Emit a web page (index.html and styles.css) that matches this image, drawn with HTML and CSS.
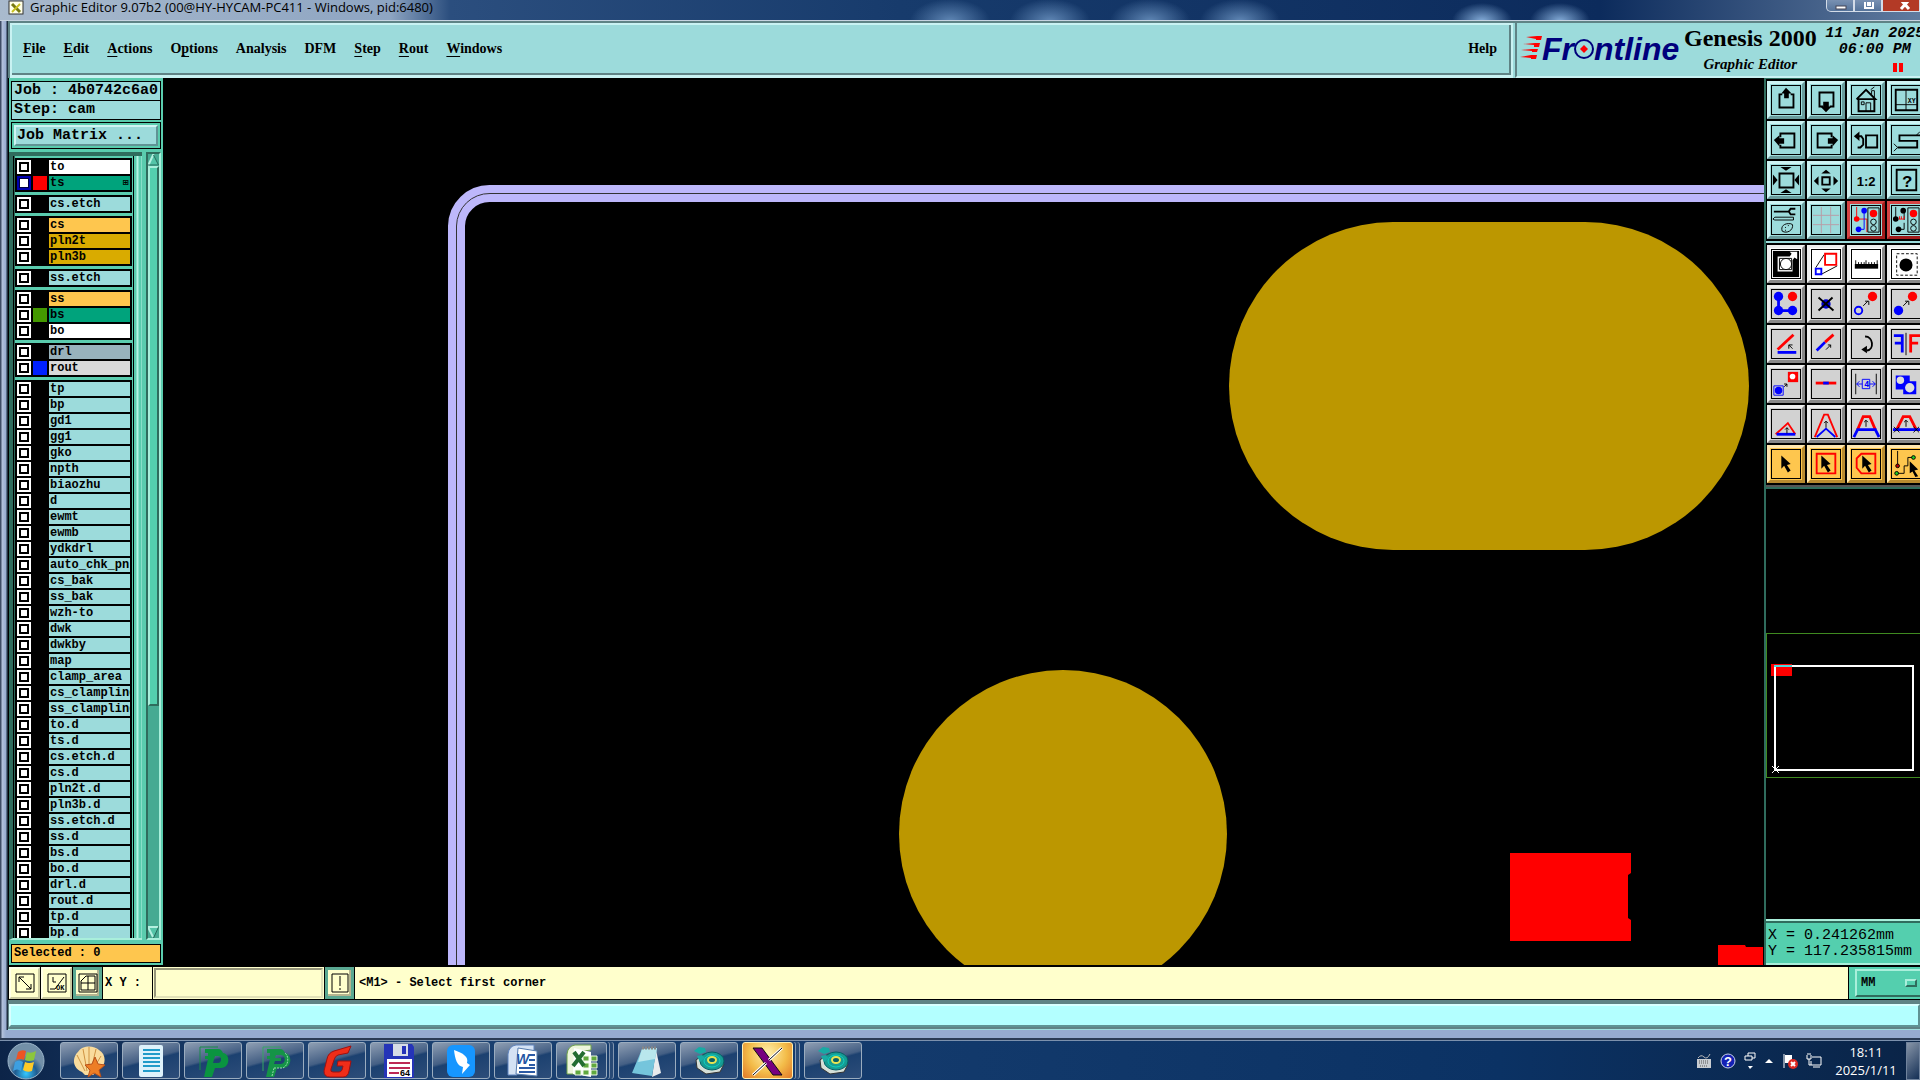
FILE: index.html
```
<!DOCTYPE html>
<html lang="en">

<head>
    <meta charset="UTF-8">
    <meta name="viewport" content="width=device-width, initial-scale=1.0">
    <title>Graphic Editor</title>
    <link rel="stylesheet" href="styles.css">
</head>

<body>

    <!-- Window title -->
    <div class="titlebar">
        <svg class="title-icon" width="16" height="16" viewBox="0 0 16 16"><rect x="1" y="1" width="14" height="13" fill="#ffffe8" stroke="#333"/><path d="M4 4l8 8" stroke="#777a10" stroke-width="3"/><path d="M12 4l-8 8" stroke="#c8c020" stroke-width="2"/></svg>
        <span class="title-text">Graphic Editor 9.07b2 (00@HY-HYCAM-PC411 - Windows, pid:6480)</span>
        <div class="window-buttons">
            <button class="win-btn" aria-label="Minimize"><svg width="12" height="8" viewBox="0 0 12 8"><rect x="1" y="4" width="10" height="3" fill="#fff" stroke="#445"/></svg></button>
            <button class="win-btn" aria-label="Maximize"><svg width="12" height="8" viewBox="0 0 12 8"><path d="M2 0v6h8V0M5 0v3h2V0" fill="none" stroke="#fff" stroke-width="2"/></svg></button>
            <button class="win-btn close" aria-label="Close"><svg width="12" height="8" viewBox="0 0 12 8"><path d="M2-2l8 9M10-2l-8 9" stroke="#fff" stroke-width="3"/></svg></button>
        </div>
    </div>

    <div class="frame">

        <header class="top">
            <nav class="menu">
                <a href="#"><u>F</u>ile</a>
                <a href="#"><u>E</u>dit</a>
                <a href="#"><u>A</u>ctions</a>
                <a href="#">O<u>p</u>tions</a>
                <a href="#">Analysis</a>
                <a href="#">DFM</a>
                <a href="#"><u>S</u>tep</a>
                <a href="#"><u>R</u>out</a>
                <a href="#"><u>W</u>indows</a>
                <a href="#" class="help">Help</a>
            </nav>
            <div class="brand">
                <div class="logo">
                    <svg width="22" height="24" viewBox="0 0 22 24" fill="#f00"><path d="M6 2l11-1h5l-1 4h-5v-1zM3 9l12-1h5l-1 4h-5v-2zM1 15l11-1h6l-1 3h-5v-1zM0 22l11-2h6l-1 4h-5v-1z"/></svg>
                    <span>Fr</span>
                    <svg width="20" height="24" viewBox="0 0 20 24"><circle cx="10" cy="14" r="9" fill="none" stroke="#00007c" stroke-width="2"/><path d="M10 10l4 4-4 4-4-4z" fill="#f00"/></svg>
                    <span>ntline</span>
                </div>
                <div class="product">
                    <div class="product-name">Genesis 2000</div>
                    <div class="product-sub">Graphic Editor</div>
                </div>
                <div class="clock">
                    <div>11 Jan 2025</div>
                    <div>06:00 PM</div>
                    <div class="pause"><i></i><i></i></div>
                </div>
            </div>
        </header>

        <div class="work">

            <!-- Layer list -->
            <aside class="sidebar">
                <div class="info">Job : 4b0742c6a0</div>
                <div class="info">Step: cam</div>
                <div class="matrix"><button class="matrix-btn">Job Matrix ...</button></div>
                <div class="layers">
                    <div class="layer-list">
                        <div class="group">
                            <label class="row"><input type="checkbox"><i></i><span class="white">to</span></label>
                            <label class="row"><input type="checkbox" checked><i class="red"></i><span class="green">ts<b>⊞</b></span></label>
                        </div>
                        <div class="group">
                            <label class="row"><input type="checkbox"><i></i><span>cs.etch</span></label>
                        </div>
                        <div class="group">
                            <label class="row"><input type="checkbox"><i></i><span class="orange">cs</span></label>
                            <label class="row"><input type="checkbox"><i></i><span class="gold">pln2t</span></label>
                            <label class="row"><input type="checkbox"><i></i><span class="gold">pln3b</span></label>
                        </div>
                        <div class="group">
                            <label class="row"><input type="checkbox"><i></i><span>ss.etch</span></label>
                        </div>
                        <div class="group">
                            <label class="row"><input type="checkbox"><i></i><span class="orange">ss</span></label>
                            <label class="row"><input type="checkbox"><i class="lime"></i><span class="green">bs</span></label>
                            <label class="row"><input type="checkbox"><i></i><span class="white">bo</span></label>
                        </div>
                        <div class="group">
                            <label class="row"><input type="checkbox"><i></i><span class="slate">drl</span></label>
                            <label class="row"><input type="checkbox"><i class="blue"></i><span class="gray">rout</span></label>
                        </div>
                        <div class="group">
                            <label class="row"><input type="checkbox"><i></i><span>tp</span></label>
                            <label class="row"><input type="checkbox"><i></i><span>bp</span></label>
                            <label class="row"><input type="checkbox"><i></i><span>gd1</span></label>
                            <label class="row"><input type="checkbox"><i></i><span>gg1</span></label>
                            <label class="row"><input type="checkbox"><i></i><span>gko</span></label>
                            <label class="row"><input type="checkbox"><i></i><span>npth</span></label>
                            <label class="row"><input type="checkbox"><i></i><span>biaozhu</span></label>
                            <label class="row"><input type="checkbox"><i></i><span>d</span></label>
                            <label class="row"><input type="checkbox"><i></i><span>ewmt</span></label>
                            <label class="row"><input type="checkbox"><i></i><span>ewmb</span></label>
                            <label class="row"><input type="checkbox"><i></i><span>ydkdrl</span></label>
                            <label class="row"><input type="checkbox"><i></i><span>auto_chk_pnl</span></label>
                            <label class="row"><input type="checkbox"><i></i><span>cs_bak</span></label>
                            <label class="row"><input type="checkbox"><i></i><span>ss_bak</span></label>
                            <label class="row"><input type="checkbox"><i></i><span>wzh-to</span></label>
                            <label class="row"><input type="checkbox"><i></i><span>dwk</span></label>
                            <label class="row"><input type="checkbox"><i></i><span>dwkby</span></label>
                            <label class="row"><input type="checkbox"><i></i><span>map</span></label>
                            <label class="row"><input type="checkbox"><i></i><span>clamp_area</span></label>
                            <label class="row"><input type="checkbox"><i></i><span>cs_clampline</span></label>
                            <label class="row"><input type="checkbox"><i></i><span>ss_clampline</span></label>
                            <label class="row"><input type="checkbox"><i></i><span>to.d</span></label>
                            <label class="row"><input type="checkbox"><i></i><span>ts.d</span></label>
                            <label class="row"><input type="checkbox"><i></i><span>cs.etch.d</span></label>
                            <label class="row"><input type="checkbox"><i></i><span>cs.d</span></label>
                            <label class="row"><input type="checkbox"><i></i><span>pln2t.d</span></label>
                            <label class="row"><input type="checkbox"><i></i><span>pln3b.d</span></label>
                            <label class="row"><input type="checkbox"><i></i><span>ss.etch.d</span></label>
                            <label class="row"><input type="checkbox"><i></i><span>ss.d</span></label>
                            <label class="row"><input type="checkbox"><i></i><span>bs.d</span></label>
                            <label class="row"><input type="checkbox"><i></i><span>bo.d</span></label>
                            <label class="row"><input type="checkbox"><i></i><span>drl.d</span></label>
                            <label class="row"><input type="checkbox"><i></i><span>rout.d</span></label>
                            <label class="row"><input type="checkbox"><i></i><span>tp.d</span></label>
                            <label class="row"><input type="checkbox"><i></i><span>bp.d</span></label>
                        </div>
                    </div>
                    <div class="scroll">
                        <svg width="11" height="12" viewBox="0 0 11 12"><path d="M5.500 0L11 12H0z" fill="#54c4a8"/><path d="M5.500 0L0 12" stroke="#b5f0e0" stroke-width="2"/><path d="M5.500 1l5 10H0" fill="none" stroke="#25695a"/></svg>
                        <div class="scroll-track"><div class="scroll-thumb"></div></div>
                        <svg width="11" height="12" viewBox="0 0 11 12"><path d="M0 0h11L5.500 12z" fill="#54c4a8"/><path d="M11 1H0l5 10" fill="none" stroke="#b5f0e0" stroke-width="2"/><path d="M11 0L5.500 12" stroke="#25695a"/></svg>
                    </div>
                </div>
                <div class="selected">Selected : 0</div>
            </aside>

            <!-- Board drawing -->
            <main class="canvas">
                <svg viewBox="0 0 1601 887" preserveAspectRatio="xMinYMin slice">
                    <path d="M293.500 900V148A33 33 0 0 1 327 115.500H1610" fill="none" stroke="#bdb7fb" stroke-width="17"/>
                    <path d="M293.500 900V148A33 33 0 0 1 327 115.500H1610" fill="none" stroke="#333"/>
                    <rect x="1066" y="144" width="520" height="328" rx="164" fill="#bc9700"/>
                    <circle cx="900" cy="756" r="164" fill="#bc9700"/>
                    <path d="M1347 775h121v20l-3 2v43l3 2v21h-121zM1555 867h27l1 2h17v18h-45z" fill="#f00"/>
                </svg>
            </main>

            <!-- Tools -->
            <aside class="tools">
                <div class="tool-grid">
                    <button aria-label="Pan up"><svg viewBox="0 0 30 30"><path class="k2" d="M11 9H8v14h15V9h-3"/><path d="M15 2l6 6h-3v5h-5V8h-3z"/></svg></button>
                    <button aria-label="Pan down"><svg viewBox="0 0 30 30"><path class="k2" d="M12 22H8V7h15v15h-4"/><path d="M15 28l-6-6h3v-5h6v5h3z"/></svg></button>
                    <button aria-label="Home"><svg viewBox="0 0 30 30"><path class="k1" d="M5 14L15 4l10 10M7 14v13h17V13M21 9V5h3v7M15 27v-9h5v9M10 17h3v3h-3zM20 4l4-3"/><path class="k2" d="M5 14L15 4l10 10H5M7 14v13h17V13"/></svg></button>
                    <button aria-label="Coordinates"><svg viewBox="0 0 30 30"><path class="k2" d="M4 4h23v22H4z"/><path class="k1" d="M15 4v22M4 20h23"/><text x="17" y="18" font-size="7">XY</text></svg></button>

                    <button aria-label="Pan left"><svg viewBox="0 0 30 30"><path class="k2" d="M9 12V8h15v15H9v-3"/><path d="M2 15l6-5v3h5v6H8v3z"/></svg></button>
                    <button aria-label="Pan right"><svg viewBox="0 0 30 30"><path class="k2" d="M21 12V8H6v15h15v-3"/><path d="M28 15l-6-5v3h-5v6h5v3z"/></svg></button>
                    <button aria-label="Previous view"><svg viewBox="0 0 30 30"><path class="k2" d="M15 10h12v13H15zM4 11h6l2 3v6l-3 3H6"/><path d="M2 11l6-5v10z"/></svg></button>
                    <button aria-label="Serpentine"><svg viewBox="0 0 30 30"><path class="k2" d="M30 10H8v6h19v7H6"/><path class="k1" d="M26 10l4-4M2 19l4 4-4 4"/></svg></button>

                    <button aria-label="Zoom in"><svg viewBox="0 0 30 30"><path class="k2" d="M8 8h15v15H8z"/><path d="M9 1h12l-6 4zM9 29h12l-6-4zM1 9v12l5-6zM29 9v12l-5-6z"/></svg></button>
                    <button aria-label="Zoom out"><svg viewBox="0 0 30 30"><path class="k2" d="M11 12h8v8h-8z"/><path d="M10 8h10l-5-4zM10 24h10l-5 4zM7 11v10l-5-5zM23 11v10l5-5z"/></svg></button>
                    <button aria-label="Zoom one to two"><svg viewBox="0 0 30 30"><text class="sans" x="5" y="21" font-size="14" font-weight="bold">1:2</text></svg></button>
                    <button aria-label="Query"><svg viewBox="0 0 30 30"><path class="k2" d="M5 4h21v22H5z"/><text x="11" y="22" font-size="18" font-weight="bold">?</text></svg></button>

                    <button aria-label="Settings"><svg viewBox="0 0 30 30"><path class="k2" d="M2 6h16M25 3h-5l-2 3 2 3h5"/><path class="k1" d="M3 12h20v3H3l-2-1zM20 19c-7-1-11 3-9 8 5 3 12-1 11-7zM14 23h1M17 21h1M14 26h1"/></svg></button>
                    <button aria-label="Grid"><svg viewBox="0 0 30 30"><path d="M10 1v28M20 1v28M1 10h28M1 20h28" fill="none" stroke="#b99ba5"/></svg></button>
                    <button class="alert" aria-label="Net check"><svg viewBox="0 0 30 30"><path d="M5 1v13h11v14" fill="none" stroke="#f00"/><path d="M13 3v22H7" fill="none" stroke="#00f" stroke-width="1"/><circle cx="5" cy="14" r="3" fill="#f00"/><circle cx="13" cy="5" r="3" fill="#00f"/><circle cx="7" cy="25" r="3" fill="#00f"/><path class="k1" d="M17 2h12v26H17z"/><circle cx="23" cy="8" r="4" fill="#f00"/><circle class="k1" cx="23" cy="17" r="3"/><circle class="k1" cx="23" cy="24" r="3"/></svg></button>
                    <button class="alert" aria-label="Spacing check"><svg viewBox="0 0 30 30"><path class="k1" d="M4 1v14M13 4v11M7 25h6v-7M17 2h12v26H17z"/><path d="M7 14h6M8 11v3M10 11v3M13 11v3" fill="none" stroke="#f00"/><circle cx="4" cy="14" r="3"/><circle cx="12" cy="5" r="3"/><circle cx="7" cy="25" r="3"/><circle cx="23" cy="8" r="4" fill="#f00"/><circle class="k1" cx="23" cy="17" r="3"/><circle class="k1" cx="23" cy="24" r="3"/></svg></button>
                </div>

                <div class="tool-grid edit">
                    <button class="white" aria-label="Feature"><svg viewBox="0 0 30 30"><path d="M1 1h28v28H1z"/><path d="M6 7h13l2-3-2-2h8v8l-3-2-2 3v12H6z" fill="#fff"/><path class="k1" d="M8 9h13v12H8z"/><circle cx="15" cy="15" r="6" fill="#fff" stroke="#000"/></svg></button>
                    <button class="white" aria-label="Scale"><svg viewBox="0 0 30 30"><path class="k1" d="M4 19L13 5M10 26l17-9"/><path d="M14 4h12v12H14z" fill="none" stroke="#f00" stroke-width="2"/><path d="M4 20h6v6H4z" fill="none" stroke="#00f" stroke-width="2"/></svg></button>
                    <button class="white" aria-label="Measure"><svg viewBox="0 0 30 30"><path d="M3 15h25v5H3z"/><path class="k1" d="M4 11v6M7 13v4M10 13v4M13 13v4M15 11v6M18 13v4M21 13v4M24 13v4M27 11v6"/></svg></button>
                    <button class="white" aria-label="Select pad"><svg viewBox="0 0 30 30"><path class="k1" d="M5 4h22v23H5z" stroke-dasharray="3 2"/><circle cx="15" cy="16" r="7"/></svg></button>

                    <button aria-label="Connect"><svg viewBox="0 0 30 30"><path d="M7 7v15h15" fill="none" stroke="#00f" stroke-width="3"/><circle cx="7" cy="7" r="5" fill="#00f"/><circle cx="7" cy="22" r="5" fill="#00f"/><circle cx="22" cy="22" r="5" fill="#00f"/><circle cx="22" cy="7" r="5" fill="#f00"/></svg></button>
                    <button aria-label="Delete"><svg viewBox="0 0 30 30"><circle cx="15" cy="15" r="5" fill="#00c"/><path class="k2" d="M7 8l16 14M22 8L7 22"/></svg></button>
                    <button aria-label="Move"><svg viewBox="0 0 30 30"><circle cx="7" cy="22" r="4" fill="none" stroke="#00f" stroke-width="2"/><circle cx="22" cy="7" r="5" fill="#f00"/><path class="k1" d="M12 17l5-5M14 12h4v4"/></svg></button>
                    <button aria-label="Copy"><svg viewBox="0 0 30 30"><circle cx="7" cy="22" r="5" fill="#00f"/><circle cx="22" cy="7" r="5" fill="#f00"/><path class="k1" d="M12 17l5-5M14 12h4v4"/></svg></button>

                    <button aria-label="Rotate"><svg viewBox="0 0 30 30"><path d="M6 21L23 5" stroke="#f00" stroke-width="3"/><path d="M6 24h20" stroke="#00f" stroke-width="3"/><path class="k1" d="M22 20l-4-4M22 16h-4v4"/></svg></button>
                    <button aria-label="Stretch"><svg viewBox="0 0 30 30"><path d="M5 22l9-9" stroke="#00f" stroke-width="3"/><path d="M14 13l9-8" stroke="#f00" stroke-width="3"/><path class="k1" d="M15 21l5-5M17 16h3v3"/></svg></button>
                    <button aria-label="Undo"><svg viewBox="0 0 30 30"><path d="M14 7c9 0 10 14 2 15" fill="none" stroke="#000" stroke-width="2"/><path d="M10 21l6-4v8z"/></svg></button>
                    <button aria-label="Mirror"><svg viewBox="0 0 30 30"><path d="M2 6h9v18M3 14h8" fill="none" stroke="#00f" stroke-width="3"/><path class="k1" d="M15 3v24"/><path d="M30 6H20v18M20 14h8" fill="none" stroke="#f00" stroke-width="3"/></svg></button>

                    <button aria-label="Copy to layer"><svg viewBox="0 0 30 30"><path d="M17 2h11v11H17z" fill="#f00"/><circle cx="22" cy="7" r="3" fill="#fff"/><path d="M2 17h10v10H2z" fill="none" stroke="#00f"/><circle cx="7" cy="22" r="4" fill="#00f"/><path class="k1" d="M13 18l3-3M13 15h3v3"/></svg></button>
                    <button aria-label="Break line"><svg viewBox="0 0 30 30"><path d="M4 14h22" stroke="#f00" stroke-width="3"/><path d="M12 14h6" stroke="#00f" stroke-width="3"/></svg></button>
                    <button aria-label="Width"><svg viewBox="0 0 30 30"><path class="k1" d="M4 4v22M26 4v22"/><path d="M5 15h6M19 15h6M8 12l-3 3 3 3M22 12l3 3-3 3M11 10h8v10h-8z" fill="none" stroke="#00f"/><text x="13" y="18" font-size="9" fill="#00f">4</text></svg></button>
                    <button aria-label="Merge"><svg viewBox="0 0 30 30"><path d="M4 6h15v6h7v14H12v-5H4z" fill="#00f"/><circle cx="9" cy="11" r="4" fill="#ddd"/><circle cx="19" cy="19" r="5" fill="#ddd"/></svg></button>

                    <button aria-label="Change angle"><svg viewBox="0 0 30 30"><path d="M4 26l13-12 8 12" fill="none" stroke="#f00" stroke-width="2"/><path d="M5 26h20" stroke="#00f" stroke-width="3"/><path class="k1" d="M16 25v-6M14 21l2-2 2 2"/></svg></button>
                    <button aria-label="Move corner"><svg viewBox="0 0 30 30"><path d="M3 29L13 5h4l10 24" fill="none" stroke="#f00" stroke-width="2"/><path d="M5 29l10-9 10 9" fill="none" stroke="#00f" stroke-width="2"/><path class="k1" d="M15 19v-7M13 14l2-2 2 2"/></svg></button>
                    <button aria-label="Move segment"><svg viewBox="0 0 30 30"><path d="M6 21L12 7h7l6 14" fill="none" stroke="#f00" stroke-width="3"/><path d="M2 29l4-8h19l4 8" fill="none" stroke="#00f" stroke-width="3"/><path class="k1" d="M15 18v-7M13 13l2-2 2 2"/></svg></button>
                    <button aria-label="Slide segment"><svg viewBox="0 0 30 30"><path d="M5 21L12 7h7l7 14" fill="none" stroke="#f00" stroke-width="3"/><path d="M1 21h29" stroke="#00f" stroke-width="3"/><path class="k1" d="M15 18v-7M13 13l2-2 2 2M2 18l6 6M8 18l-6 6M23 18l6 6M29 18l-6 6"/></svg></button>

                    <button class="amber" aria-label="Select"><svg viewBox="0 0 30 30"><path d="M10 6l10 9-4 1 4 6-3 2-4-7-3 3z"/></svg></button>
                    <button class="amber" aria-label="Select in frame"><svg viewBox="0 0 30 30"><path d="M5 4h20v21H5z" fill="none" stroke="#f00" stroke-width="2"/><path d="M10 6l10 9-4 1 4 6-3 2-4-7-3 3z"/></svg></button>
                    <button class="amber" aria-label="Select in polygon"><svg viewBox="0 0 30 30"><path d="M10 4h15v21H10l-5-6V9z" fill="none" stroke="#f00" stroke-width="2"/><path d="M11 6l10 9-4 1 4 6-3 2-4-7-3 3z"/></svg></button>
                    <button class="amber" aria-label="Select net"><svg viewBox="0 0 30 30"><path class="k1" d="M6 1v16M6 25h7v-8h4V8h7"/><circle cx="6" cy="17" r="2" fill="#b00" stroke="#000"/><circle cx="5" cy="25" r="2" fill="#2c2" stroke="#000"/><circle cx="23" cy="8" r="2" fill="#2c2" stroke="#000"/><path d="M19 12l9 9-4 1 4 6-3 1-3-6-3 2z"/></svg></button>
                </div>

                <div class="overview">
                    <div class="overview-box">
                        <svg width="154" height="144" viewBox="0 0 154 144"><path d="M4 31h21v12H4z" fill="#f00"/><path d="M8 33h138v104H8z" fill="none" stroke="#fff" stroke-width="2"/><path d="M7 33h18" stroke="#4cd9dd" stroke-width="2"/><path d="M5 133l7 7M12 133l-7 7" stroke="#fff"/></svg>
                    </div>
                </div>
                <div class="coords">
                    <div>X = 0.241262mm</div>
                    <div>Y = 117.235815mm</div>
                </div>
            </aside>
        </div>

        <!-- Prompt line -->
        <div class="prompt">
            <button class="snap" aria-label="Snap"><svg viewBox="0 0 20 20"><path class="k1" d="M1 1h18v18H1zM4 4l12 12M4 9V4h5M16 11v5h-5"/></svg></button>
            <button class="snap" aria-label="Angle"><svg viewBox="0 0 20 20"><path class="k1" d="M1 1h18v18H1zM3 16h5L17 4M6 4v5h3"/><text x="9" y="17" font-size="7">OK</text></svg></button>
            <button class="snap pressed" aria-label="Grid snap"><svg viewBox="0 0 20 20"><path class="k1" d="M1 1h18v18H1zM3 17V8l5-5h9v14zM10 3v14M3 10h14"/></svg></button>
            <label class="xy-label" for="xy">X Y :</label>
            <input class="xy-input" type="text" id="xy">
            <button class="snap pressed" aria-label="Messages"><svg viewBox="0 0 20 20"><path class="k1" d="M2 1h16v18H2zM10 3v10M10 15v2"/></svg></button>
            <div class="hint">&lt;M1&gt; - Select first corner</div>
            <div class="units"><button class="units-btn">MM<i></i></button></div>
        </div>

        <div class="message"><input type="text" aria-label="Message"></div>
    </div>

    <!-- Taskbar -->
    <footer class="taskbar">
        <button class="start" aria-label="Start"><svg width="38" height="38" viewBox="0 0 38 38"><defs><radialGradient id="orb" cx="50%" cy="85%"><stop offset="0" stop-color="#35c8ff"/><stop offset="60%" stop-color="#1f5c91"/><stop offset="100%" stop-color="#7390a8"/></radialGradient></defs><circle cx="19" cy="19" r="18" fill="url(#orb)" stroke="#9ab3c8"/><path d="M11 10q4-3 8-1l-2 9q-4-2-8 0z" fill="#ee5423"/><path d="M20 10q4 2 9-1l-2 9q-5 2-9 0z" fill="#8cc63e"/><path d="M8 20q4-3 8 0l-2 9q-4-3-8 0z" fill="#3d9fe0"/><path d="M18 20q4 2 9 0l-2 9q-5 2-9-1z" fill="#ffca28"/></svg></button>
        <button class="task" aria-label="Shell"><svg width="34" height="34" viewBox="0 0 34 34"><path d="M10 28C-3 22 3 10 6 8 10 1 22 1 27 6c8 5 7 15 0 20l-6 5h-8z" fill="#f9dc9d"/><path d="M13 27L5 11M15 27L11 5M17 26V3M19 26L24 5M20 27l9-15" stroke="#cf9343"/><path d="M23 13l3 7 7 1-6 5 2 7-7-4-6 4 2-7-5-5 7-1z" fill="#ed7e25" stroke="#b8501a"/></svg></button>
        <button class="task" aria-label="Documents"><svg width="34" height="34" viewBox="0 0 34 34"><rect x="5" y="1" width="24" height="32" rx="2" fill="#def2fb"/><path d="M9 6h17M9 10h17M9 14h17M9 18h17M9 22h17M9 27h17" stroke="#219bc9" stroke-width="2"/></svg></button>
        <button class="task" aria-label="P viewer"><svg width="34" height="34" viewBox="0 0 34 34"><path d="M4 26V3h18" fill="none" stroke="#198b48"/><path d="M9 5h13c3 0 4 2 5 4 8 1 7 16-3 15h-5l-3 9H8l4-18H9v-3h3v-3H9zM19 12l-2 7h5c4 0 4-7 0-7z" fill="#0a9440" fill-rule="evenodd"/></svg></button>
        <button class="task" aria-label="F viewer"><svg width="34" height="34" viewBox="0 0 34 34"><path d="M5 27V3h18" fill="none" stroke="#37a565"/><path d="M9 5h13c3 0 4 2 5 4 8 1 7 16-3 15h-5l-3 9H8l4-18H9v-3h3v-3H9zM18 11l-1 3h6v3h-6l-1 3h7c5 0 5-9 0-9z" fill="#159447" fill-rule="evenodd"/><path d="M16 24h9c6-3 6-12 2-15M14 32l2-8" fill="none" stroke="#9adcb0" stroke-dasharray="2 1"/></svg></button>
        <button class="task" aria-label="G tool"><svg width="34" height="34" viewBox="0 0 34 34"><path d="M31 2L14 7Q8 9 7 15L4 27q0 6 6 6h13q5 0 6-6l2-10H18l-1 5h6l-1 4q-1 2-3 2h-6q-3 0-2-3l3-9q1-4 4-5l10-2z" fill="#ef2d19" stroke="#a01010"/></svg></button>
        <button class="task" aria-label="Save"><svg width="34" height="34" viewBox="0 0 34 34"><path d="M2 0h28l2 3v31H2z" fill="#2534b8"/><path d="M11 0h15v12H11z" fill="#d6dce6"/><path d="M20 2h4v8h-4z" fill="#2534b8"/><path d="M5 15h25v18H5z" fill="#fff"/><path d="M7 19h21M7 24h21M7 29h10" stroke="#bd2854" stroke-width="2"/><text x="18" y="32" font-size="9">64</text></svg></button>
        <button class="task" aria-label="Bird"><svg width="34" height="34" viewBox="0 0 34 34"><rect x="3" y="1" width="28" height="32" rx="6" fill="#1696ff"/><path d="M10 6c9 3 15 7 13 13l3 2-8 9 1-7c-6-1-8-8-9-17z" fill="#fff"/></svg></button>
        <button class="task" aria-label="Word"><svg width="34" height="34" viewBox="0 0 34 34"><path d="M2 31V10Q3 2 10 1h18v6H14l-3 24z" fill="#d4e2f4" stroke="#5e83bd"/><path d="M12 4l19 3v25l-21-2z" fill="#fff" stroke="#557caf"/><path d="M23 11h6M23 16h6M23 21h6M13 24h16M13 28h16" stroke="#2b5aa5" stroke-width="2"/><text x="10" y="20" font-size="14" font-weight="bold" font-style="italic" fill="#2457a4">W</text></svg></button>
        <div class="stack"><button class="task" aria-label="Excel"><svg width="34" height="34" viewBox="0 0 34 34"><path d="M2 30V10Q3 2 10 1h16v5L12 8v22z" fill="#edf5dc" stroke="#6fa348"/><path d="M9 4l17 4v25l-18-3z" fill="#fff"/><path d="M18 12h6v5h-6zM26 12h6v5h-6zM18 19h6v5h-6zM26 19h6v5h-6zM10 26h6v5h-6zM18 26h6v5h-6zM26 26h6v5h-6z" fill="#60a83e" stroke="#eef8e6"/><path d="M9 8l10 14M19 8L8 22" stroke="#236c31" stroke-width="4"/></svg></button></div>
        <button class="task" aria-label="Notepad"><svg width="34" height="34" viewBox="0 0 34 34"><path d="M26 6l5 23-9 4z" fill="#e8ebed"/><path d="M12 5l15-1-5 28-20-3z" fill="#75c5dc"/><path d="M12 5l15-1-2 11-17 3z" fill="#b9e7ed"/><path d="M12 4h15" stroke="#888" stroke-width="3" stroke-dasharray="2 1"/></svg></button>
        <button class="task" aria-label="Editor"><svg width="34" height="34" viewBox="0 0 34 34"><path d="M4 16l8-6 20 10-4 8-14 2-9-6z" fill="#d5dfd8" stroke="#333"/><ellipse cx="20" cy="17" rx="12" ry="9" fill="#169c93" stroke="#075f66"/><ellipse cx="20" cy="17" rx="8" ry="6" fill="none" stroke="#0dd0c0"/><ellipse cx="20" cy="16" rx="4" ry="3" fill="#075f66" stroke="#e8e452" stroke-width="2"/><path d="M2 7l5-4 6 1 1 4-6 2zM5 12l5-1 3 3-5 4z" fill="#18aaa4"/></svg></button>
        <div class="stack"><button class="task active" aria-label="X server"><svg width="34" height="34" viewBox="0 0 34 34"><path d="M2 4h9l20 27h-9z" fill="#770080" stroke="#111"/><path d="M31 4L18 16M15 19L2 31" stroke="#fff" stroke-width="3"/><path d="M31 4L18 16M15 19L2 31" stroke="#111"/></svg></button></div>
        <button class="task" aria-label="Graphic station"><svg width="34" height="34" viewBox="0 0 34 34"><path d="M4 16l8-6 20 10-4 8-14 2-9-6z" fill="#d5dfd8" stroke="#333"/><ellipse cx="20" cy="17" rx="12" ry="9" fill="#169c93" stroke="#075f66"/><ellipse cx="20" cy="17" rx="8" ry="6" fill="none" stroke="#0dd0c0"/><ellipse cx="20" cy="16" rx="4" ry="3" fill="#075f66" stroke="#e8e452" stroke-width="2"/><path d="M2 7l5-4 6 1 1 4-6 2zM5 12l5-1 3 3-5 4z" fill="#18aaa4"/></svg></button>

        <div class="tray">
            <svg width="16" height="16" viewBox="0 0 16 16"><path d="M1 6h14v9H1z" fill="#c8ccd1"/><path d="M3 8h10M3 10h10M4 13h8" stroke="#555" stroke-dasharray="1 1"/><path d="M2 5q3-4 6-1t6-3" fill="none" stroke="#bbb"/></svg>
            <svg width="16" height="16" viewBox="0 0 16 16"><circle cx="8" cy="8" r="7" fill="#1421b5" stroke="#c8d0e8"/><text x="4" y="13" font-size="13" font-weight="bold" fill="#fff">?</text></svg>
            <svg width="12" height="18" viewBox="0 0 12 18" fill="none"><path d="M4 4V1h7v5H8M1 4h7v4H1z" stroke="#fff"/><path d="M4 14h5l-3 3z" fill="#fff"/></svg>
            <svg width="10" height="8" viewBox="0 0 10 8"><path d="M1 6l4-4 4 4z" fill="#fff"/></svg>
            <svg width="16" height="16" viewBox="0 0 16 16"><path d="M2 1v14" stroke="#fff"/><path d="M3 2h7v8H3z" fill="#fff"/><circle cx="11" cy="11" r="5" fill="#dc2922"/><path d="M9 9l4 4M13 9l-4 4" stroke="#fff" stroke-width="2"/></svg>
            <svg width="16" height="16" viewBox="0 0 16 16" fill="none" stroke="#fff"><path d="M6 4h9v8H5V8M7 14h7" stroke-width="1"/><path d="M1 2v4h4V2M3 6v6h2M2 0v2M4 0v2"/></svg>
            <div class="time"><div>18:11</div><div>2025/1/11</div></div>
            <button class="show-desktop" aria-label="Show desktop"></button>
        </div>
    </footer>

</body>

</html>
```
FILE: styles.css
```
/* General */
* {
    box-sizing: border-box;
}

body {
    margin: 0;
    height: 100vh;
    display: flex;
    flex-direction: column;
    overflow: hidden;
    background: #000;
    color: #000;
    font-family: "Liberation Mono", monospace;
    font-size: 12px;
    font-weight: bold;
}

button {
    margin: 0;
    padding: 0;
    border: 0;
    font: inherit;
    color: inherit;
    border-radius: 0;
}

svg {
    display: block;
    flex: none;
}

.k1,
.k2 {
    fill: none;
    stroke: #000;
    stroke-width: 1;
}

.k2 {
    stroke-width: 2;
}

.sans {
    font-family: "Liberation Sans", sans-serif;
}

/* Title bar */
.titlebar {
    flex: none;
    height: 21px;
    padding-left: 8px;
    display: flex;
    align-items: flex-start;
    gap: 6px;
    background:
        radial-gradient(ellipse 40px 22px at 950px 21px, #5f86b4, transparent),
        radial-gradient(ellipse 40px 22px at 1050px 21px, #5f86b4, transparent),
        radial-gradient(ellipse 40px 22px at 1150px 21px, #5f86b4, transparent),
        radial-gradient(ellipse 40px 22px at 1240px 21px, #5f86b4, transparent),
        radial-gradient(ellipse 30px 18px at 1482px 21px, #84acd8, transparent),
        radial-gradient(ellipse 30px 18px at 1560px 21px, #84acd8, transparent),
        linear-gradient(90deg, #a9bacd, #8ea5c2 390px, #2b4e7e 450px, #173b6c 900px, #0c2b5c 1600px, #607b9f 100%);
    border-bottom: 1px solid #c6d3e0;
}

.title-text {
    font-family: "Open Sans", sans-serif;
    font-size: 13px;
    font-weight: normal;
    line-height: 14px;
}

.window-buttons {
    margin-left: auto;
    display: flex;
}

.win-btn {
    width: 28px;
    height: 12px;
    padding-left: 8px;
    background: linear-gradient(#7991b2, #55739a);
    border: 1px solid #d3dce8;
    border-top: 0;
}

.win-btn:first-child {
    border-bottom-left-radius: 5px;
}

.win-btn.close {
    width: 38px;
    padding-left: 16px;
    background: #b33a26;
}

/* Window frame */
.frame {
    flex: 1;
    min-height: 0;
    display: flex;
    flex-direction: column;
    padding: 0 0 8px 8px;
    background: linear-gradient(90deg, #3f4d66 1px, #b4c2dc 2px, #97abd0 6px, #203040 7px);
    background: linear-gradient(#97abd0, #97abd0) 6px 100% / 100% 8px no-repeat, linear-gradient(90deg, #3f4d66 1px, #b4c2dc 2px, #97abd0 6px, #203040 7px);
    border-bottom: 2px solid #2c3b55;
}

/* Header */
.top {
    flex: none;
    height: 57px;
    display: flex;
    gap: 2px;
    border-top: 2px solid #5f8385;
    border-left: 2px solid #5f8385;
    background: #9cdbdb;
    font-family: "Liberation Serif", serif;
}

.menu {
    flex: 1;
    display: flex;
    align-items: center;
    gap: 18px;
    padding: 0 14px 2px 11px;
    border: 2px solid #c9f2f2;
    border-bottom-width: 3px;
    box-shadow: inset -2px -2px #5f8385;
    font-size: 14px;
}

.menu a {
    color: #000;
    text-decoration: none;
}

.menu u {
    text-underline-offset: 3px;
}

.help {
    margin-left: auto;
}

.brand {
    width: 405px;
    display: flex;
    flex: none;
    padding-left: 3px;
    border-left: 2px solid #5f8385;
    border-bottom: 2px solid #c9f2f2;
    overflow: hidden;
}

.logo {
    display: flex;
    align-items: flex-start;
    padding-top: 12px;
    font-family: "Liberation Sans", sans-serif;
    font-size: 32px;
    line-height: 28px;
    font-style: italic;
    color: #00007c;
}

.product {
    width: 142px;
    text-align: center;
    flex: none;
}

.product-name {
    font-size: 24px;
    line-height: 30px;
}

.product-sub {
    font-size: 15px;
    line-height: 22px;
    font-style: italic;
}

.clock {
    flex: none;
    padding: 3px 0 0 4px;
    font-family: "Liberation Mono", monospace;
    font-size: 15px;
    line-height: 16px;
    font-style: italic;
    text-align: center;
}

.pause {
    display: flex;
    justify-content: center;
    gap: 2px;
    padding: 5px 0 0 46px;
}

.pause i {
    width: 4px;
    height: 9px;
    background: #f00;
}

/* Work area */
.work {
    flex: 1;
    min-height: 0;
    display: flex;
    background: #000;
}

.sidebar {
    width: 155px;
    flex: none;
    display: flex;
    flex-direction: column;
    padding: 3px 2px 2px;
    background: #5accae;
    border-left: 1px solid #000;
}

.info {
    flex: none;
    height: 20px;
    padding-left: 2px;
    line-height: 18px;
    border: 1px solid #000;
    background: #9cdbdb;
    font-size: 15px;
    white-space: nowrap;
}

.info + .info {
    margin-top: -1px;
}

.matrix {
    flex: none;
    margin: 2px 0 3px;
    padding: 2px;
    border: 1px solid #000;
}

.matrix-btn {
    width: 100%;
    height: 21px;
    padding-left: 1px;
    border: 2px solid;
    border-color: #d0f4f4 #5f9394 #5f9394 #d0f4f4;
    background: #9cdbdb;
    font-size: 15px;
    line-height: 17px;
    text-align: left;
}

.layers {
    flex: 1;
    min-height: 0;
    display: flex;
    gap: 4px;
    margin-left: -2px;
}

.layer-list {
    flex: 1;
    overflow: hidden;
    padding: 5px 9px 0 4px;
    border-top: 4px solid #2f6c5d;
    border-left: 4px solid #2f6c5d;
    border-bottom: 2px solid #a9efdb;
    background: linear-gradient(90deg, #000 1px, #5accae 2px, #5accae 120px, #000 120px, #000 121px, #5accae 121px, #5accae 123px, #b5f2e2 124px, #b5f2e2 125px, #5accae 126px, #5accae 128px, #b5f2e2 129px);
}

.group {
    width: 117px;
    margin: -3px 0 6px -2px;
    padding: 2px;
    display: flex;
    flex-direction: column;
    gap: 2px;
    background: #000;
}

.row {
    height: 14px;
    display: flex;
    gap: 2px;
}

.row input {
    appearance: none;
    flex: none;
    width: 14px;
    height: 14px;
    margin: 0;
    padding: 2px;
    border: 2px solid #fff;
    background: #fff;
    box-shadow: inset 0 0 0 2px #000;
}

.row input:checked {
    border-color: #0000b0;
    box-shadow: inset 0 0 0 1px #000040;
}

.row i {
    width: 14px;
    flex: none;
}

.row span {
    flex: 1;
    min-width: 0;
    display: flex;
    justify-content: space-between;
    overflow: hidden;
    padding: 0 1px;
    line-height: 14px;
    background: #9cdbdb;
}

.row b {
    font-family: "DejaVu Sans", sans-serif;
    font-size: 8px;
}

.row .red { background: #f00; }
.row .lime { background: #449900; }
.row .blue { background: #0020ff; }
.row .white { background: #fff; }
.row .green { background: #00a37c; }
.row .orange { background: #fec64e; }
.row .gold { background: #d9ab00; }
.row .slate { background: #98b2bc; }
.row .gray { background: #d9d9d9; }

.scroll {
    width: 15px;
    display: flex;
    flex-direction: column;
    border: 2px solid;
    border-color: #2f6c5d #a9efdb #a9efdb #2f6c5d;
    background: #46aa92;
}

.scroll-track {
    flex: 1;
}

.scroll-thumb {
    height: 71%;
    border: 2px solid;
    border-color: #a9efdb #2f6c5d #2f6c5d #a9efdb;
    background: #54cfae;
}

.selected {
    flex: none;
    height: 19px;
    margin-top: 4px;
    padding-left: 2px;
    border: 1px solid #000;
    background: #fec64e;
    line-height: 17px;
}

.canvas {
    flex: 1;
    min-width: 0;
    overflow: hidden;
}

.canvas svg {
    width: 100%;
    height: 100%;
}

/* Tools */
.tools {
    width: 156px;
    flex: none;
    display: flex;
    flex-direction: column;
    overflow: hidden;
    border-left: 2px solid #2f6c5d;
}

.tool-grid {
    display: grid;
    grid-template-columns: repeat(4, 38px);
    gap: 2px;
    padding: 2px 0 0 1px;
    border-top: 1px solid #2f6c5d;
}

.tool-grid.edit {
    margin-top: 2px;
    padding: 2px 0 2px 1px;
    border-top: 2px solid #9cdbdb;
    border-bottom: 2px solid #555;
}

.tool-grid button {
    width: 38px;
    height: 38px;
    padding: 1px;
    border: 3px solid;
    border-color: #cdf3f3 #6a9c9c #6a9c9c #cdf3f3;
    background: #9cdbdb;
}

.tool-grid.edit button {
    border-color: #eee #888 #888 #eee;
    background: #d2d2d2;
}

.tool-grid .alert {
    border-color: #d54545 #a21c1c #a21c1c #d54545;
}

.tool-grid.edit .white {
    background: #fff;
}

.tool-grid.edit .amber {
    border-color: #ffe7b0 #b98b30 #b98b30 #ffe7b0;
    background: #fec64e;
}

.tool-grid svg {
    width: 30px;
    height: 30px;
    border: 1px solid #000;
}

.overview {
    flex: 1;
    padding-top: 144px;
    border-top: 2px solid #2f6c5d;
}

.overview-box {
    border: 1px solid #3f8a20;
    border-right: 0;
    overflow: hidden;
}

.overview-box svg {
    margin-top: -1px;
}

.coords {
    height: 46px;
    padding: 7px 2px 0;
    border-top: 2px solid #a9efdb;
    border-bottom: 2px solid #a9efdb;
    background: #54cfae;
    box-shadow: inset 0 2px #2f6c5d;
    font-size: 15px;
    line-height: 16px;
    font-weight: normal;
    white-space: nowrap;
}

/* Prompt line */
.prompt {
    flex: none;
    height: 35px;
    padding: 2px 0 1px 1px;
    display: flex;
    gap: 1px;
    background: #000;
}

.snap {
    width: 31px;
    flex: none;
    padding: 4px;
    border: 2px solid;
    border-color: #ffffe8 #c9c9a0 #c9c9a0 #ffffe8;
    background: #ffffcc;
}

.snap.pressed {
    width: 29px;
    padding: 2px;
    border: 3px solid #5aa892;
    box-shadow: inset -2px -2px #b5b590;
}

.snap svg {
    width: 20px;
    height: 20px;
    margin: 0 auto;
}

.xy-label {
    width: 49px;
    padding-left: 2px;
    line-height: 33px;
    background: #ffffcc;
}

.xy-input {
    width: 171px;
    min-width: 0;
    padding: 0 4px;
    border: 3px solid;
    border-color: #96967a #e2e2b8 #e2e2b8 #96967a;
    outline: 1px solid #ffffcc;
    outline-offset: -1px;
    background: #ffffcc;
    font: inherit;
}

.hint {
    flex: 1;
    padding-left: 4px;
    line-height: 33px;
    background: #ffffcc;
}

.units {
    width: 71px;
    flex: none;
    padding: 2px 0 2px 6px;
    background: #54cfae;
}

.units-btn {
    width: 78px;
    height: 28px;
    padding: 0 14px 0 4px;
    display: flex;
    align-items: center;
    justify-content: space-between;
    border: 2px solid;
    border-color: #a9efdb #2f6c5d #2f6c5d #a9efdb;
    background: #54cfae;
}

.units-btn i {
    width: 12px;
    height: 8px;
    border: 2px solid;
    border-color: #a9efdb #2f6c5d #2f6c5d #a9efdb;
}

.message {
    flex: none;
    height: 30px;
    padding: 3px 0 2px 1px;
    border-top: 1px solid #5f8385;
    border-bottom: 1px solid #9fdede;
    background: #5f8385;
}

.message input {
    display: block;
    width: 100%;
    height: 100%;
    border: 2px solid;
    border-color: #d8ffff #5f9394 #5f9394 #d8ffff;
    background: #b3ffff;
    font: inherit;
}

/* Taskbar */
.taskbar {
    flex: none;
    height: 40px;
    display: flex;
    align-items: center;
    gap: 4px;
    padding-left: 7px;
    background: linear-gradient(90deg, #0c2448, #1d4271 300px, #133a6c 900px, #0b3264 1500px, #0a2447 100%);
    border-top: 1px solid #7c91ad;
}

.taskbar text {
    font-family: "Liberation Sans", sans-serif;
}

.start {
    width: 49px;
    background: none;
}

.task {
    width: 58px;
    height: 37px;
    display: flex;
    align-items: center;
    justify-content: center;
    border: 1px solid #9aacbf;
    border-radius: 3px;
    background: linear-gradient(165deg, #8e9eb3, #445f84 45%, #1c4170 50%, #2d4d79);
}

.stack {
    width: 58px;
    padding-right: 6px;
    border-right: 1px solid #8296b0;
    border-radius: 3px;
    box-shadow: inset -3px 0 #284a76, inset -4px 0 #8296b0;
}

.stack .task {
    width: 51px;
}

.task.active {
    background: radial-gradient(ellipse at 50% 30%, #fff2b0, #f3bc49 55%, #e17828);
    border-color: #fff0b0;
}

.tray {
    margin-left: auto;
    display: flex;
    align-items: center;
    gap: 8px;
    color: #fff;
}

.time {
    width: 64px;
    margin-left: 4px;
    font-family: "Open Sans", sans-serif;
    font-size: 13px;
    font-weight: normal;
    line-height: 18px;
    text-align: center;
}

.show-desktop {
    width: 14px;
    height: 38px;
    background: linear-gradient(135deg, #8795a8, #142f55);
    border: 1px solid #6f829c;
}
```
